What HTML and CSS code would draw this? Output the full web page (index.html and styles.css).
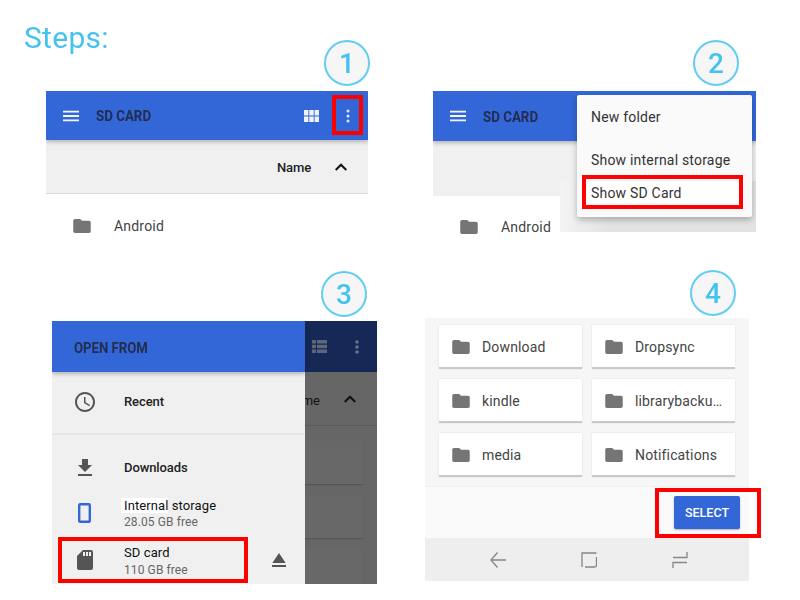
FILE: index.html
```html
<!DOCTYPE html>
<html lang="en">
<head>
<meta charset="utf-8">
<title>Steps</title>
<link rel="stylesheet" href="styles.css">
</head>
<body>
<svg class="defs" width="0" height="0" aria-hidden="true">
  <symbol id="folder" viewBox="2 4 20 16"><path d="M10 4H4c-1.1 0-2 .9-2 2v12c0 1.100.9 2 2 2h16c1.100 0 2-.9 2-2V8c0-1.100-.9-2-2-2h-8l-2-2z"/></symbol>
  <symbol id="menu" viewBox="3 6 18 12"><path d="M3 18h18v-2H3v2zm0-5h18v-2H3v2zm0-7v2h18V6H3z"/></symbol>
  <symbol id="chev" viewBox="6 8 12 7.410"><path d="M12 8l-6 6 1.410 1.410L12 10.830l4.590 4.580L18 14z"/></symbol>
</svg>
<main class="canvas">
  <h1 class="steps">Steps:</h1>

  <section class="shot shot1">
    <header class="bar">
      <svg class="ic-menu"><use href="#menu"/></svg>
      <span class="bar-title">SD CARD</span>
      <span class="spacer"></span>
      <svg class="ic-grid" viewBox="0 0 15 12"><path d="M0 0h4.400v5.500H0zM5.300 0h4.400v5.500H5.300zM10.600 0H15v5.500h-4.400zM0 6.500h4.400V12H0zM5.300 6.500h4.400V12H5.300zM10.600 6.500H15V12h-4.400z"/></svg>
      <svg class="ic-dots" viewBox="0 0 4 14"><circle cx="2" cy="2" r="1.500"/><circle cx="2" cy="7" r="1.500"/><circle cx="2" cy="12" r="1.500"/></svg>
    </header>
    <div class="sortbar">
      <span class="sort-name">Name</span>
      <svg class="ic-chev"><use href="#chev"/></svg>
    </div>
    <div class="row-android">
      <svg class="ic-folder"><use href="#folder"/></svg>
      <span>Android</span>
    </div>
    <div class="mark mark1"></div>
  </section>

  <section class="shot shot2">
    <header class="bar bar2">
      <svg class="ic-menu"><use href="#menu"/></svg>
      <span class="bar-title">SD CARD</span>
    </header>
    <div class="sortbar sortbar2"></div>
    <div class="row-android row-android2">
      <svg class="ic-folder"><use href="#folder"/></svg>
      <span>Android</span>
    </div>
    <div class="menu-shade"></div>
    <div class="menu">
      <div class="menu-item">New folder</div>
      <div class="menu-item">Show internal storage</div>
      <div class="menu-item menu-last">Show SD Card</div>
    </div>
    <div class="mark mark2"></div>
  </section>

  <section class="shot shot3">
    <div class="behind">
      <div class="behind-bar">
        <svg class="ic-list" viewBox="0 0 15 13"><path d="M0 0h4v3.500H0zM5 0h10v3.500H5zM0 4.700h4v3.600H0zM5 4.700h10v3.600H5zM0 9.500h4V13H0zM5 9.500h10V13H5z"/></svg>
        <svg class="ic-dots dim" viewBox="0 0 4 14"><circle cx="2" cy="2" r="1.800"/><circle cx="2" cy="7" r="1.800"/><circle cx="2" cy="12" r="1.800"/></svg>
      </div>
      <div class="behind-sort">
        <span>me</span>
        <svg class="ic-chev"><use href="#chev"/></svg>
      </div>
      <div class="behind-cards">
        <div class="behind-card"></div>
        <div class="behind-card"></div>
        <div class="behind-card"></div>
      </div>
    </div>
    <aside class="drawer">
      <div class="drawer-head"><span class="drawer-title">OPEN FROM</span></div>
      <div class="root root-recent">
        <svg class="ic-root" viewBox="0 0 24 24"><path d="M11.990 2C6.470 2 2 6.480 2 12s4.470 10 9.990 10C17.520 22 22 17.520 22 12S17.520 2 11.990 2zM12 20c-4.420 0-8-3.580-8-8s3.580-8 8-8 8 3.580 8 8-3.580 8-8 8zm.5-13H11v6l5.250 3.150.75-1.230-4.500-2.670z"/></svg>
        <span class="root-name">Recent</span>
      </div>
      <div class="root-rule"></div>
      <div class="root root-dl">
        <svg class="ic-root" viewBox="0 0 24 24"><path d="M19 9h-4V3H9v6H5l7 7 7-7zM5 18v2h14v-2H5z"/></svg>
        <span class="root-name">Downloads</span>
      </div>
      <div class="root root-int">
        <svg class="ic-phone" viewBox="0 0 13 20"><rect x="1.200" y="1.200" width="10.600" height="17.600" rx="1"/></svg>
        <div class="root-text text-int">
          <span class="root-name root-plain"><span class="patch">Internal</span> storage</span>
          <span class="root-sub">28.05 GB free</span>
        </div>
      </div>
      <div class="root root-sd">
        <svg class="ic-root" viewBox="0 0 24 24"><path d="M18 2h-8L4.020 8 4 20c0 1.100.9 2 2 2h12c1.100 0 2-.9 2-2V4c0-1.100-.9-2-2-2zm-6 6h-2V4h2v4zm3 0h-2V4h2v4zm3 0h-2V4h2v4z"/></svg>
        <div class="root-text text-sd">
          <span class="root-name root-plain">SD card</span>
          <span class="root-sub">110 GB free</span>
        </div>
        <svg class="ic-eject" viewBox="5 5 14 14"><path d="M5 17h14v2H5zm7-12L5.330 15h13.340z"/></svg>
      </div>
    </aside>
    <div class="mark mark3"></div>
  </section>

  <section class="shot shot4">
    <div class="grid">
      <div class="card"><svg class="ic-folder"><use href="#folder"/></svg><span>Download</span></div>
      <div class="card"><svg class="ic-folder"><use href="#folder"/></svg><span>Dropsync</span></div>
      <div class="card"><svg class="ic-folder"><use href="#folder"/></svg><span>kindle</span></div>
      <div class="card"><svg class="ic-folder"><use href="#folder"/></svg><span>librarybacku…</span></div>
      <div class="card"><svg class="ic-folder"><use href="#folder"/></svg><span>media</span></div>
      <div class="card"><svg class="ic-folder"><use href="#folder"/></svg><span>Notifications</span></div>
    </div>
    <div class="actions"><span class="select">SELECT</span></div>
    <nav class="navbar">
      <svg class="nav-ic" viewBox="0 0 16 16"><path d="M7.500 .5L1 8l6.500 7.500M1 8h15"/></svg>
      <svg class="nav-ic" viewBox="0 0 16 16"><path d="M15.500 1H1v14M4 15h9.500a2 2 0 0 0 2-2V5"/></svg>
      <svg class="nav-ic" viewBox="0 0 16 16"><path d="M15 0v5.500H1M15 10.500H1V16"/></svg>
    </nav>
    <div class="mark mark4"></div>
  </section>

  <div class="badge badge1">1</div>
  <div class="badge badge2">2</div>
  <div class="badge badge3">3</div>
  <div class="badge badge4">4</div>
</main>
</body>
</html>
```
FILE: styles.css
```css
* { box-sizing: border-box; }
html, body { margin: 0; padding: 0; background: #fff; }
body { font-family: Roboto, "Liberation Sans", sans-serif; color: #2b2b2b; }
.defs { position: absolute; }
.canvas { position: relative; width: 800px; height: 600px; overflow: hidden; }
svg { display: block; fill: currentColor; flex: none; }

.steps {
  position: absolute; left: 24px; top: 20px; margin: 0;
  font-size: 30px; font-weight: 400; line-height: 36px; letter-spacing: .3px; color: #45c3f0;
  filter: blur(.5px);
}

.badge {
  position: absolute; width: 46px; height: 46px; border-radius: 50%;
  border: 2.500px solid #62cdf2; background: #f6f6f6;
  display: flex; align-items: center; justify-content: center;
  font-size: 28px; font-weight: 500; color: #45c3f0; filter: blur(.5px);
}
.badge1 { left: 324px; top: 40px; }
.badge2 { left: 693px; top: 40px; }
.badge3 { left: 321px; top: 271px; }
.badge4 { left: 690px; top: 270px; }

.shot { position: absolute; overflow: hidden; }
.shot1 { left: 46px; top: 91px; width: 322px; height: 160px; }
.shot2 { left: 433px; top: 91px; width: 323px; height: 160px; }
.shot3 { left: 52px; top: 321px; width: 325px; height: 263px; }
.shot4 { left: 425px; top: 318px; width: 324px; height: 263px; background: #f6f6f6; overflow: visible; }

.mark { position: absolute; border: 4px solid #f00; }
.mark1 { left: 286px; top: 4px; width: 31px; height: 40px; }
.mark2 { left: 149px; top: 84px; width: 161px; height: 34px; }
.mark3 { left: 6px; top: 216px; width: 190px; height: 46px; }
.mark4 { left: 230px; top: 170px; width: 106px; height: 50px; }

.bar {
  height: 49px; background: #3366d6; color: #fff; display: flex; align-items: center;
  padding: 0 0 0 17px; position: relative; box-shadow: 0 2px 4px rgba(0,0,0,.25);
}
.bar2 { height: 50px; }
.bar-title {
  margin-left: 17px; padding-top: 1px; font-size: 15.500px; font-weight: 700; color: #232d4e;
  transform: scaleX(.86); transform-origin: left center;
}
.spacer { flex: 1; }
.ic-menu { width: 16px; height: 12px; color: #f4f6fc; }
.ic-grid { width: 15px; height: 12px; color: #eef2fb; margin-right: 27px; }
.ic-dots { width: 4px; height: 14px; color: #dfe7f8; margin-right: 18px; }

.sortbar {
  height: 54px; background: #f0f0f0; border-bottom: 1px solid #dcdcdc;
  display: flex; align-items: center; justify-content: flex-end; padding-right: 21px;
}
.sort-name { font-size: 13px; font-weight: 500; color: #222; margin-right: 24px; padding-top: 2px; letter-spacing: -.1px; }
.ic-chev { width: 12px; height: 8px; color: #111; }

.row-android {
  display: flex; align-items: center; padding: 24px 0 0 27px; gap: 23px;
  font-size: 14px; color: #444; letter-spacing: .2px;
}
.ic-folder { width: 18px; height: 14px; color: #757575; }

.sortbar2 { height: 55px; border-bottom: 0; }
.row-android2 { padding-top: 23px; }

.menu-shade {
  position: absolute; left: 127px; top: 90px; width: 196px; height: 51px;
  background: linear-gradient(90deg, #f4f4f4, #e3e3e3 25%, #e3e3e3);
}
.menu {
  position: absolute; left: 144px; top: 4px; width: 175px; height: 122px;
  background: #fafafa; border-radius: 2px; box-shadow: 0 3px 6px rgba(0,0,0,.25);
  font-size: 14px; color: #333; letter-spacing: .2px; padding: 11px 0 0 14px;
}
.menu-item { height: 22px; line-height: 22px; }
.menu-item:nth-child(2) { margin-top: 21px; }
.menu-item.menu-last { margin: 11px 9px 0 -10px; padding-left: 10px; background: #fff; }

.behind { position: absolute; inset: 0; background: #666; }
.behind-bar {
  height: 51px; background: #162855; color: #5f6880; display: flex; align-items: center;
  justify-content: flex-end;
}
.ic-list { width: 15px; height: 13px; color: #5e6679; margin-right: 28px; }
.ic-dots.dim { color: #6b7284; margin-right: 18px; width: 4px; }
.behind-sort {
  height: 54px; border-bottom: 1px solid #5b5b5b; display: flex; align-items: center;
  justify-content: flex-end; padding-right: 21px; color: #111; font-size: 13px; font-weight: 400;
}
.behind-sort span { margin-right: 24px; padding-top: 3px; }
.behind-cards { display: flex; flex-direction: column; gap: 11px; padding: 15px 14px 0 0; }
.behind-card { height: 43px; background: #686868; box-shadow: 0 1px 1px #555; flex: none; }

.drawer {
  position: absolute; left: 0; top: 0; bottom: 0; width: 253px; background: #f0f0f0;
  display: flex; flex-direction: column;
}
.drawer-head {
  height: 51px; background: #3366d6; color: #232d4e; font-size: 15.500px; font-weight: 700;
  display: flex; align-items: center; padding: 2px 0 0 22px;
  box-shadow: 0 2px 4px rgba(0,0,0,.25); flex: none;
}
.drawer-title { transform: scaleX(.85); transform-origin: left center; }
.root { display: flex; align-items: center; padding-left: 21px; flex: none; position: relative; }
.root-recent { height: 59px; margin-bottom: 2px; }
.root-rule { height: 2px; background: #e6e6e6; flex: none; }
.root-dl { height: 55px; margin-top: 5px; }
.root-int { height: 36px; }
.root-sd { height: 47px; margin-top: 5px; }
.ic-root { width: 24px; height: 24px; color: #555; flex: none; }
.ic-phone { width: 13px; height: 20px; margin: 0 6px 0 5px; fill: none; stroke: #3366d6; stroke-width: 2.400; }
.root-name { font-size: 13px; font-weight: 500; color: #222; margin-left: 27px; display: block; line-height: 16px; letter-spacing: -.1px; }
.root-name.root-plain { font-weight: 400; letter-spacing: .1px; color: #111; }
.patch { background: #fff; padding: 0 0 0 3px; margin-left: -3px; }
.root-text { display: flex; flex-direction: column; gap: 1px; }
.text-int { padding-top: 2px; gap: 0; }
.text-sd { padding-top: 4px; }
.root-sub { font-size: 12px; color: #666; margin-left: 27px; line-height: 16px; letter-spacing: .1px; }
.ic-eject { position: absolute; left: 220px; top: 17px; width: 14px; height: 14px; color: #555; }

.grid {
  height: 169px; display: grid; grid-template-columns: 143px 143px; column-gap: 10px;
  grid-auto-rows: 44px; row-gap: 10px; padding: 7px 0 0 14px; border-bottom: 1px solid #efefef;
}
.card {
  background: #fff; border-bottom: 2px solid #c9c9c9; box-shadow: 0 0 2px rgba(0,0,0,.1);
  display: flex; align-items: center; padding: 2px 0 0 13px; gap: 12px; font-size: 14px; color: #444; letter-spacing: .15px;
}
.actions { height: 51px; background: #fafafa; display: flex; align-items: center; justify-content: flex-end; padding-right: 9px; }
.select {
  width: 66px; height: 33px; background: #3366d6; border-radius: 2px; color: #fff; font-size: 12.500px; font-weight: 500;
  display: flex; align-items: center; justify-content: center; box-shadow: 0 1px 2px rgba(0,0,0,.3);
}
.navbar { height: 43px; background: #eee; display: flex; align-items: center; padding-left: 65px; gap: 75px; }
.nav-ic { width: 16px; height: 16px; fill: none; stroke: #868686; stroke-width: 1.300px; }
```
